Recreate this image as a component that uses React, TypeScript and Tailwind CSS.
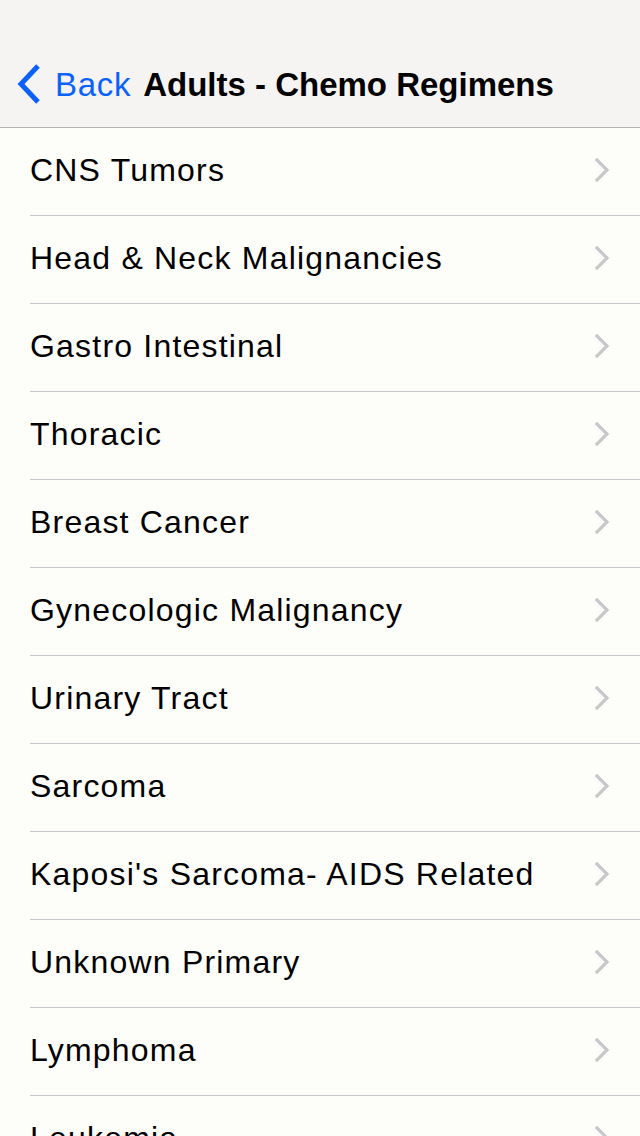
const items = [
  'CNS Tumors',
  'Head & Neck Malignancies',
  'Gastro Intestinal',
  'Thoracic',
  'Breast Cancer',
  'Gynecologic Malignancy',
  'Urinary Tract',
  'Sarcoma',
  "Kaposi's Sarcoma- AIDS Related",
  'Unknown Primary',
  'Lymphoma',
  'Leukemia',
];

function Chevron() {
  return (
    <svg width="16" height="26" viewBox="0 0 16 26" className="shrink-0">
      <path d="M3 3 L13 13 L3 23" fill="none" stroke="#c7c7cc" strokeWidth="3.2" strokeLinecap="square" />
    </svg>
  );
}

export default function App() {
  return (
    <div
      className="w-[640px] h-[1136px] overflow-hidden bg-[#fdfdf9]"
      style={{ fontFamily: '"Liberation Sans", Arial, sans-serif' }}
    >
      {/* Nav bar */}
      <div className="h-[128px] bg-[#f6f4f2] border-b border-[#b2b2b2] flex items-end pb-[22px]">
        <div className="flex items-center">
          <svg width="26" height="42" viewBox="0 0 26 42" className="ml-[16px]">
            <path d="M22 3 L5 21 L22 39" fill="none" stroke="#0a62fe" strokeWidth="5" />
          </svg>
          <span className="ml-[13px] text-[33px] leading-none tracking-[0.7px] text-[#0a62fe]">Back</span>
          <span className="ml-[12px] text-[33px] leading-none font-bold text-black">Adults - Chemo Regimens</span>
        </div>
      </div>

      {/* List */}
      <div>
        {items.map((item) => (
          <div key={item} className="pl-[30px]">
            <div className="h-[88px] flex items-center justify-between pr-[30px] pb-[3px] border-b border-[#c8c7cc]">
              <span className="text-[32px] leading-none tracking-[1.2px] text-black">{item}</span>
              <Chevron />
            </div>
          </div>
        ))}
      </div>
    </div>
  );
}
